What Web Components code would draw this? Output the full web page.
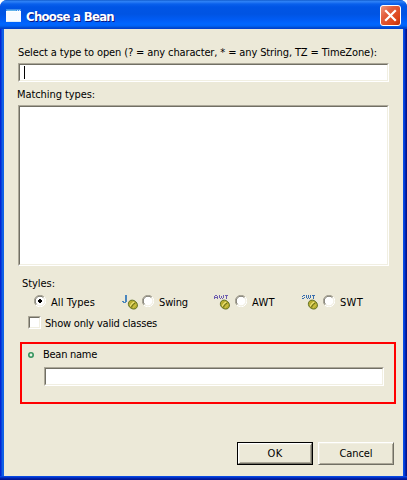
<!DOCTYPE html>
<html lang="en"><head><meta charset="utf-8"><title>Choose a Bean</title>
<style>
html,body{margin:0;width:407px;height:480px;overflow:hidden;background:#fff}
body{font:11px/14px "DejaVu Sans Condensed","DejaVu Sans",sans-serif;color:#000}
.line{display:flex;height:14px}
.choices{display:grid;grid-template-columns:88px 92px 88px 1fr;height:16px;margin:2px 0 0 30px}
.name-row{display:grid;grid-template-columns:15px 1fr;align-items:center;height:14px;padding:4px 0 0 6px}
.actions{display:flex;gap:5px;margin:38px 0 0 233px}
</style></head><body>
<xp-window heading="Choose a Bean">
  <div class="line" style="margin:17px 0 0 14px"><fit-text size="358">Select a type to open (? = any character, * = any String, TZ = TimeZone):</fit-text></div>
  <xp-field caret style="margin:3px 14px 0 14px;height:19px"></xp-field>
  <div class="line" style="margin:6px 0 0 13px"><fit-text size="77">Matching types:</fit-text></div>
  <xp-field style="margin:3px 14px 0 14px;height:161px"></xp-field>
  <div class="line" style="margin:11px 0 0 18px"><fit-text size="32">Styles:</fit-text></div>
  <div class="choices">
    <xp-radio checked><fit-text size="43">All Types</fit-text></xp-radio>
    <xp-radio><bean-icon slot="icon" kind="J"></bean-icon><fit-text size="28">Swing</fit-text></xp-radio>
    <xp-radio style="--gap:5px"><bean-icon slot="icon" kind="AWT"></bean-icon><fit-text size="22">AWT</fit-text></xp-radio>
    <xp-radio style="--gap:5px"><bean-icon slot="icon" kind="SWT"></bean-icon><fit-text size="22">SWT</fit-text></xp-radio>
  </div>
  <xp-check style="margin:6px 0 0 24px"><fit-text size="111">Show only valid classes</fit-text></xp-check>
  <red-frame>
    <div class="name-row"><ring-mark></ring-mark><fit-text size="53">Bean name</fit-text></div>
    <xp-field style="margin:5px 10px 0 22px;height:19px"></xp-field>
  </red-frame>
  <div class="actions"><xp-button default><fit-text size="14">OK</fit-text></xp-button><xp-button><fit-text size="32">Cancel</fit-text></xp-button></div>
</xp-window>
<script>
function element(name, html, setup){
  customElements.define(name, class extends HTMLElement{
    connectedCallback(){
      if(this.shadowRoot) return;
      this.attachShadow({mode:'open'}).innerHTML = typeof html==='function' ? html(this) : html;
      if(setup) setup(this);
    }
  });
}
/* Text tracked out or in so that it takes exactly `size` pixels. */
element('fit-text','<style>:host{display:inline-block;white-space:pre}span{display:inline-block}</style><span><slot></slot></span>', el=>{
  const s=el.shadowRoot.querySelector('span'), n=el.textContent.length;
  const w=s.getBoundingClientRect().width;
  s.style.letterSpacing=((+el.getAttribute('size')+1-w)/n)+'px';
});
element('xp-window', el=>`<style>
:host{display:flex;flex-direction:column;box-sizing:border-box;width:407px;height:480px;border-radius:7px 7px 0 0;overflow:hidden;
 background:linear-gradient(90deg,#0019cf 0,#0831d9 1px,#0855dd 2px,#166aee 3px,#0855dd 4px,#0855dd calc(100% - 4px),#0543e8 calc(100% - 3px),#0032c8 calc(100% - 2px),#001590 calc(100% - 1px),#00138c)}
header{display:flex;align-items:center;box-sizing:border-box;height:29px;flex:none;padding:2px 6px 0 6px;gap:5px;
 background:linear-gradient(#0a4fc0 0,#2d83f5 1px,#2a7cf5 2px,#0960ec 4px,#0055e5 7px,#0054e3 14px,#005cf5 20px,#0066ff 24px,#0062f5 26px,#0046c8 28px,#003dd7 29px)}
h1{flex:1;margin:0;padding-top:2px;font:bold 13px/18px "DejaVu Sans Condensed","DejaVu Sans",sans-serif;color:#fff;text-shadow:1px 1px #0a1883}
main{flex:1;margin:0 4px;background:#ece9d8;overflow:hidden;display:flow-root}
footer{height:4px;flex:none;background:linear-gradient(#0950e5,#0540df 1px,#0025b0 2px,#00138c 4px)}
svg{display:block;flex:none}
</style><header>
<svg width="15" height="13" viewBox="0 0 15 13" style="margin-top:-1px"><path d="M0 0h15v13H0z" fill="#f8fbff"/><path d="M0 0h15v2H0z" fill="#3d8ce8"/><path d="M1 1h9v1H1z" fill="#64b4ea"/><path d="M11 1h1v1h-1zm2 0h1v1h-1z" fill="#bfe2ff"/><path d="M0 2h15v1H0z" fill="#fff"/><path d="M0 12h15v1H0z" fill="#dcebf8"/></svg>
<h1><fit-text size="87">${el.getAttribute('heading')}</fit-text></h1>
<svg width="21" height="21" viewBox="0 0 21 21"><defs><linearGradient id="g" x1="0" y1="0" x2="1" y2="1"><stop stop-color="#f09b83"/><stop offset=".35" stop-color="#e35f3e"/><stop offset=".75" stop-color="#dc4519"/><stop offset="1" stop-color="#b52b08"/></linearGradient></defs><rect x=".5" y=".5" width="20" height="20" rx="2.5" fill="url(#g)" stroke="#fff"/><path d="M6 6l9 9M15 6l-9 9" stroke="#fff" stroke-width="2.2" stroke-linecap="square"/></svg>
</header><main><slot></slot></main><footer></footer>`);
element('xp-field', el=>`<style>
:host{display:block;box-sizing:border-box;border:1px solid;border-color:#aca899 #fff #fff #aca899}
div{box-sizing:border-box;height:100%;background:#fff;border:1px solid;border-color:#716f64 #f1efe2 #f1efe2 #716f64;padding:1px 0 0 4px}
i{display:block;width:1px;height:13px;background:#000}
</style><div>${el.hasAttribute('caret')?'<i></i>':''}</div>`);
element('xp-radio', el=>`<style>
:host{display:flex;align-items:center;height:16px}
svg{display:block;margin-right:5px;flex:none}
slot[name=icon]::slotted(*){margin:2px var(--gap,4px) 0 0}
span{padding-top:3px}
</style><slot name="icon"></slot><svg width="12" height="12" viewBox="0 0 12 12"><circle cx="6" cy="6" r="5" fill="#fff"/>
<path d="M1.9 10.1A5.5 5.5 0 0 1 10.1 1.9" fill="none" stroke="#aca899"/><path d="M2.6 9.4A4.6 4.6 0 0 1 9.4 2.6" fill="none" stroke="#716f64"/><path d="M10.1 1.9A5.5 5.5 0 0 1 1.9 10.1" fill="none" stroke="#fff"/><path d="M9.4 2.6A4.6 4.6 0 0 1 2.6 9.4" fill="none" stroke="#f1efe2"/>
${el.hasAttribute('checked')?'<path d="M5 4h2v1h1v2H7v1H5V7H4V5h1z"/>':''}</svg><span><slot></slot></span>`);
element('xp-check',`<style>
:host{display:flex;align-items:center;height:14px}
xp-field{width:13px;height:13px;margin-right:4px;flex:none}
span{padding-top:4px}
</style><xp-field></xp-field><span><slot></slot></span>`);
/* Pixel rows of the small captions above the beans. */
const glyphs={
 J:['#4a86be',['...##','...##','...##','...##','...##','...##','##.##','.###.']],
 AWT:['#6f5fb0',['.##..#...#.###','#..#.#.#.#..#.','####.#.#.#..#.','#..#..#.#...#.']],
 SWT:['#3a6eae',['.##.#.#.#.###','#...#.#.#..#.','..#.#.#.#..#.','##...#.#...#.']]};
element('bean-icon', el=>{
 const [color,rows]=glyphs[el.getAttribute('kind')];
 const d=rows.map((r,y)=>[...r].map((c,x)=>c==='#'?`M${x} ${y+1}h1v1h-1z`:'').join('')).join('');
 return `<style>:host{display:block;width:16px;height:16px;flex:none}svg{display:block}</style>
<svg width="16" height="16" viewBox="0 0 16 16"><path d="${d}" fill="${color}"/>
<ellipse cx="10.9" cy="10.6" rx="4.9" ry="4.1" transform="rotate(42 10.9 10.6)" fill="#b8ad30" stroke="#5f7020" stroke-width=".9"/>
<path d="M8.4 12.4Q8.8 9.6 12.2 7.9" fill="none" stroke="#efe57c" stroke-width="1.1"/><path d="M9.2 13.6Q10 10.5 13.4 8.8" fill="none" stroke="#5e6618" stroke-width=".9"/><path d="M11.3 13.7Q11.8 11.9 14.2 10.7" fill="none" stroke="#d9cf54" stroke-width=".9"/></svg>`;
});
element('ring-mark',`<style>:host{display:block;height:7px}svg{display:block}</style><svg width="7" height="7" viewBox="0 0 7 7"><circle cx="3" cy="3" r="2.2" fill="#e8f2e2" stroke="#35935e" stroke-width="1.6"/></svg>`);
element('red-frame',`<style>:host{display:block;box-sizing:border-box;width:376px;height:62px;margin:13px 0 0 16px;border:2px solid #f00}</style><slot></slot>`);
element('xp-button', el=>`<style>
:host{display:block;box-sizing:border-box;width:76px;height:23px;${el.hasAttribute('default')?'border:1px solid #000':''}}
div{display:flex;align-items:center;justify-content:center;box-sizing:border-box;height:100%;padding-top:1px;border:1px solid;border-color:#fff #716f64 #716f64 #fff;box-shadow:inset 1px 1px #f1efe2,inset -1px -1px #aca899;background:#ece9d8}
</style><div><slot></slot></div>`);
</script></body></html>
